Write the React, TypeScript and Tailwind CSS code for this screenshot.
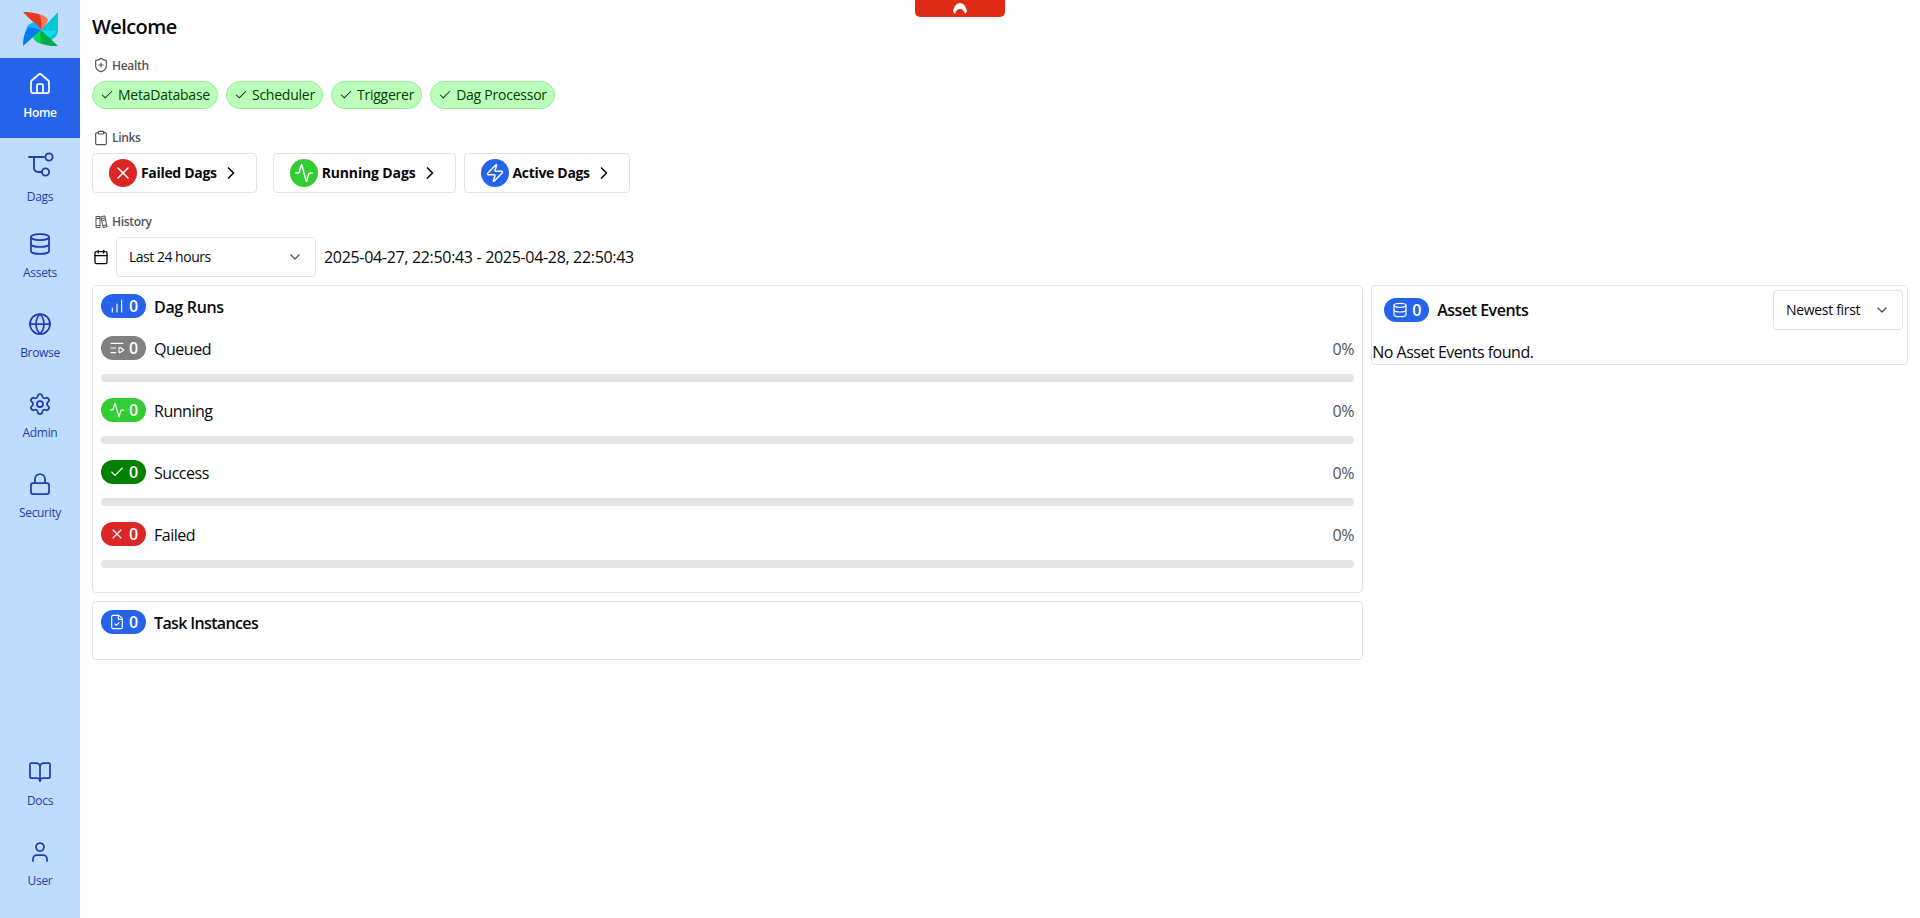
import React from "react";
import { House, Database, Globe, Settings, Lock, BookOpen, User, Check, X, Activity, Zap, ChevronRight, ChevronDown, Calendar, Clipboard, ShieldPlus, ChartNoAxesColumnIncreasing, ListVideo, FileCheck } from "lucide-react";
import { PiBooks } from "react-icons/pi";

const DagIcon = ({ className }: { className?: string }) => (
  <svg viewBox="0 0 28 28" fill="none" stroke="currentColor" strokeWidth="1.9" strokeLinecap="round" strokeLinejoin="round" className={className}>
    <path d="M3 5h15" />
    <path d="M8 5v11a4 4 0 0 0 4 4h3.5" />
    <circle cx="23" cy="5" r="3.6" />
    <circle cx="19.5" cy="20" r="3.6" />
  </svg>
);

const Logo = () => (
  <svg viewBox="0 0 36 36" className="w-9 h-9">
    <path fill="#e43921" d="M0 1 C7 1 19 2 24 8 L18 19 Z" />
    <path fill="#ff7557" d="M16 3.5 C20 4 22.5 5.5 25 8.5 C24.5 12 22 15 18 19 C19 14 19 8 16 3.5 Z" />
    <path fill="#00c7d4" d="M35 1 L35 19 C35 24 32 27 28 29 L18 19 Z" />
    <path fill="#11e1ee" d="M33 19 C32 22 29 25 27 26 C23 26 20 23 18 19 C23 20 28 20 33 19 Z" />
    <path fill="#00ad46" d="M35 35 C28 35 19 35 13 29 L18 19 Z" />
    <path fill="#04d659" d="M18 33 C14 32 12 30 10 27 C11 24 14 21 18 19 C17 24 17 28 18 33 Z" />
    <path fill="#017cee" d="M0 35 C0 29 1 20 7 13 L18 19 Z" />
    <path fill="#0cb6ff" d="M3 17 C5 14 8 12 11 11 C14 13 16 16 18 19 C13 17 8 16 3 17 Z" />
  </svg>
);

const NavItem = ({ icon, label, active }: { icon: React.ReactNode; label: string; active?: boolean }) => (
  <div className={`h-20 w-20 flex flex-col items-center pt-[14px] ${active ? "bg-[#2563eb] text-white font-semibold" : "text-[#1e40af]"}`}>
    <div className="flex items-center justify-center">{icon}</div>
    <div className="mt-[9px] text-xs leading-4">{label}</div>
  </div>
);

const SectionLabel = ({ icon, label, className, textClass }: { icon: React.ReactNode; label: string; className: string; textClass?: string }) => (
  <div className={`flex items-center h-4 gap-[3px] pl-[1px] text-xs font-semibold text-[#52525b] ${className}`}>
    {icon}
    <span className={textClass}>{label}</span>
  </div>
);

const Chip = ({ label }: { label: string }) => (
  <div className="h-7 flex items-center gap-1 px-[7px] rounded-full bg-[#bbffbb] border border-[#90ee90] text-[#003f00] text-sm font-medium tracking-[-0.017em]">
    <Check className="w-3.5 h-3.5" strokeWidth={1.75} />
    <span>{label}</span>
  </div>
);

const LinkBtn = ({ icon, bg, label, className, textClass }: { icon: React.ReactNode; bg: string; label: string; className?: string; textClass?: string }) => (
  <div className={`h-10 flex items-center pl-4 pr-[15px] border border-[#e4e4e7] rounded ${className ?? ""}`}>
    <div className={`w-7 h-7 rounded-full flex items-center justify-center text-white ${bg}`}>{icon}</div>
    <span className={`ml-1 text-sm font-bold text-[#09090b] ${textClass ?? ""}`}>{label}</span>
    <ChevronRight className="ml-1 w-5 h-5 text-[#09090b]" strokeWidth={2} />
  </div>
);

const Badge = ({ icon, bg }: { icon: React.ReactNode; bg: string }) => (
  <div className={`h-6 w-[45px] shrink-0 pl-2 flex items-center gap-1 rounded-full text-white font-semibold text-base ${bg}`}>
    {icon}
    <span className="leading-6">0</span>
  </div>
);

const StateRow = ({ icon, bg, label }: { icon: React.ReactNode; bg: string; label: string }) => (
  <div className="mb-4">
    <div className="flex items-center h-6">
      <Badge icon={icon} bg={bg} />
      <span className="relative top-[1px] ml-2 text-base text-[#09090b] tracking-[-0.03em]">{label}</span>
      <span className="relative top-[1px] ml-auto text-base text-[#52525b]">0%</span>
    </div>
    <div className="mt-[14px] h-2 rounded-full bg-[#e4e4e7]" />
  </div>
);

const I = "w-4 h-4";

export default function App() {
  return (
    <div className="flex h-screen bg-white relative overflow-hidden tracking-[-0.02em]" style={{ fontFamily: '"Open Sans", "Noto Sans", sans-serif' }}>
      <div className="w-20 shrink-0 bg-[#bfdbfe] flex flex-col">
        <div className="h-[58px] flex items-start pt-[11px] pl-[23px]"><Logo /></div>
        <NavItem active icon={<House className="w-6 h-6" strokeWidth={1.75} />} label="Home" />
        <NavItem icon={<DagIcon className="w-7 h-7" />} label="Dags" />
        <NavItem icon={<Database className="w-6 h-6" strokeWidth={1.75} />} label="Assets" />
        <NavItem icon={<Globe className="w-6 h-6" strokeWidth={1.75} />} label="Browse" />
        <NavItem icon={<Settings className="w-6 h-6" strokeWidth={1.75} />} label="Admin" />
        <NavItem icon={<Lock className="w-6 h-6" strokeWidth={1.75} />} label="Security" />
        <div className="mt-auto mb-3">
          <NavItem icon={<BookOpen className="w-6 h-6" strokeWidth={1.75} />} label="Docs" />
          <NavItem icon={<User className="w-6 h-6" strokeWidth={1.75} />} label="User" />
        </div>
      </div>

      <div className="flex-1 min-w-0 px-3 pt-3">
        <h1 className="text-xl leading-[30px] font-semibold text-[#09090b] tracking-[-0.03em]">Welcome</h1>

        <SectionLabel className="mt-[15px]" textClass="relative top-[1px]" icon={<ShieldPlus className="w-4 h-4" strokeWidth={1.75} />} label="Health" />
        <div className="mt-2 flex gap-2">
          <Chip label="MetaDatabase" />
          <Chip label="Scheduler" />
          <Chip label="Triggerer" />
          <Chip label="Dag Processor" />
        </div>

        <SectionLabel className="mt-[21px]" icon={<Clipboard className="w-4 h-4" strokeWidth={1.75} />} label="Links" />
        <div className="mt-[7px] flex">
          <LinkBtn bg="bg-[#dc2626]" icon={<X className="w-5 h-5" strokeWidth={1.75} />} label="Failed Dags" />
          <LinkBtn className="ml-4" textClass="tracking-[-0.01em]" bg="bg-[#32cd32]" icon={<Activity className="w-5 h-5" strokeWidth={1.75} />} label="Running Dags" />
          <LinkBtn className="ml-2" bg="bg-[#2563eb]" icon={<Zap className="w-5 h-5" strokeWidth={1.75} />} label="Active Dags" />
        </div>

        <SectionLabel className="mt-[21px]" icon={<PiBooks className="w-4 h-4" />} label="History" />
        <div className="mt-[7px] flex items-center h-10">
          <Calendar className="ml-[1px] w-4 h-4 text-[#09090b]" strokeWidth={2} />
          <div className="ml-[7px] w-[200px] h-10 flex items-center justify-between pl-3 pr-3 border border-[#e4e4e7] rounded text-sm text-[#09090b]">
            <span className="tracking-[-0.035em]">Last 24 hours</span>
            <ChevronDown className="w-4 h-4 text-[#52525b]" />
          </div>
          <span className="ml-2 text-base text-[#09090b]">2025-04-27, 22:50:43 - 2025-04-28, 22:50:43</span>
        </div>

        <div className="mt-2 flex items-start">
          <div className="w-[70%] shrink-0">
            <div className="border border-[#e4e4e7] rounded p-2 pb-2">
              <div className="flex items-center h-6 mb-[18px]">
                <Badge bg="bg-[#2563eb]" icon={<ChartNoAxesColumnIncreasing className={I} strokeWidth={1.75} />} />
                <span className="relative top-[1px] ml-2 text-base font-semibold text-[#09090b]">Dag Runs</span>
              </div>
              <StateRow bg="bg-[#808080]" icon={<ListVideo className={I} strokeWidth={1.75} />} label="Queued" />
              <StateRow bg="bg-[#32cd32]" icon={<Activity className={I} strokeWidth={1.75} />} label="Running" />
              <StateRow bg="bg-[#008000]" icon={<Check className={I} strokeWidth={1.75} />} label="Success" />
              <StateRow bg="bg-[#dc2626]" icon={<X className={I} strokeWidth={1.75} />} label="Failed" />
            </div>
            <div className="mt-2 border border-[#e4e4e7] rounded p-2 h-[59px]">
              <div className="flex items-center h-6">
                <Badge bg="bg-[#2563eb]" icon={<FileCheck className={I} strokeWidth={1.75} />} />
                <span className="relative top-[1px] ml-2 text-base font-semibold text-[#09090b] tracking-[-0.04em]">Task Instances</span>
              </div>
            </div>
          </div>
          <div className="flex-1 min-w-0 pl-2">
            <div className="border border-[#e4e4e7] rounded h-20">
              <div className="flex items-center pt-1 pl-3 pr-1">
                <Badge bg="bg-[#2563eb]" icon={<Database className={I} strokeWidth={1.75} />} />
                <span className="ml-2 text-base font-semibold text-[#09090b] tracking-[-0.03em]">Asset Events</span>
                <div className="ml-auto w-[130px] h-10 flex items-center justify-between pl-[12px] pr-3 border border-[#e4e4e7] rounded text-sm text-[#09090b]">
                  <span>Newest first</span>
                  <ChevronDown className="w-4 h-4 text-[#52525b]" />
                </div>
              </div>
              <div className="mt-[10px] text-base leading-6 text-[#09090b] tracking-[-0.03em]">No Asset Events found.</div>
            </div>
          </div>
        </div>
      </div>

      <div className="absolute top-0 left-[915px] w-[90px] h-[17px] bg-[#e02b17] rounded-b-[5px] flex justify-center">
        <svg viewBox="0 0 14 12" className="mt-[3px] w-[14px] h-3">
          <path fill="#ffffff" d="M7 0 C10.5 0 13 3.5 14 8.5 L12 11 C11 7.5 9.5 6 7 6 C4.5 6 3 7.5 2 11 L0 8.5 C1 3.5 3.5 0 7 0 Z" />
        </svg>
      </div>
    </div>
  );
}
